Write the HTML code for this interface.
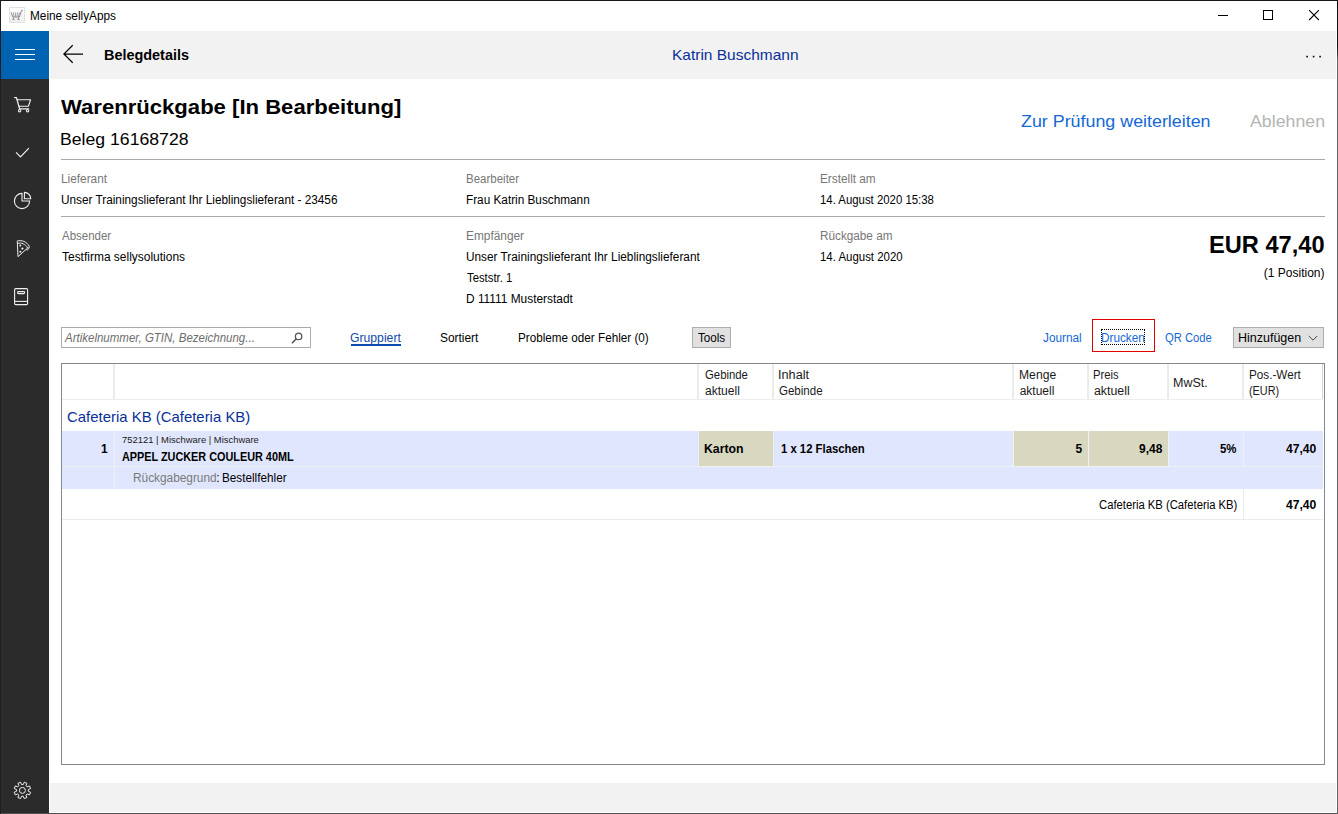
<!DOCTYPE html><html lang="de"><head><meta charset="utf-8"><title>Meine sellyApps</title><style>
*{margin:0;padding:0;box-sizing:border-box}
html,body{width:1338px;height:814px;overflow:hidden;background:#fff}
body{position:relative;font-family:"Liberation Sans", sans-serif;color:#000}
.a{position:absolute}
.t{position:absolute;white-space:nowrap;line-height:1;transform-origin:0 0}
</style></head><body>
<div class="a" style="left:0;top:0;width:1338px;height:814px;background:#fff"></div>
<div class="a" style="left:0;top:0;width:1338px;height:1px;background:#161616"></div>
<div class="a" style="left:0;top:813px;width:1338px;height:1px;background:#505050"></div>
<div class="a" style="left:0;top:0;width:1px;height:814px;background:#1e1e1e"></div>
<div class="a" style="left:1337px;top:1px;width:1px;height:813px;background:linear-gradient(#101010 0,#101010 45px,#666 60px,#666 100%)"></div>
<div class="a" style="left:1px;top:31px;width:48px;height:782px;background:#2b2b2b"></div>
<div class="a" style="left:1px;top:31px;width:48px;height:48px;background:#0063b1"></div>
<div class="a" style="left:50px;top:31px;width:1286px;height:48px;background:#f2f2f2"></div>
<div class="a" style="left:50px;top:783px;width:1286px;height:29px;background:#f2f2f2"></div>
<div class="a" style="left:61px;top:159px;width:1264px;height:1px;background:#a9a9a9"></div>
<div class="a" style="left:61px;top:216px;width:1264px;height:1px;background:#a9a9a9"></div>
<div class="a" style="left:61px;top:327px;width:250px;height:21px;border:1px solid #ababab;background:#fff"></div>
<div class="a" style="left:351px;top:344px;width:50px;height:2px;background:#0c4db4"></div>
<div class="a" style="left:692px;top:327px;width:39px;height:21px;border:1px solid #adadad;background:#e1e1e1"></div>
<div class="a" style="left:1092px;top:319px;width:63px;height:33px;border:1px solid #e10000"></div>
<div class="a" style="left:1101px;top:329px;width:44px;height:16px;border:1px dotted #000"></div>
<div class="a" style="left:1233px;top:327px;width:91px;height:21px;border:1px solid #adadad;background:#e1e1e1"></div>
<div class="a" style="left:61px;top:363px;width:1264px;height:402px;border:1px solid #828790;background:#fff"></div>
<div class="a" style="left:62px;top:399px;width:1261px;height:1px;background:#ededed"></div>
<div class="a" style="left:62px;top:431px;width:1261px;height:58px;background:#e0e6fd"></div>
<div class="a" style="left:62px;top:466px;width:1261px;height:1px;background:#f0f0f0"></div>
<div class="a" style="left:114px;top:431px;width:1px;height:58px;background:#f0f0f0"></div>
<div class="a" style="left:698px;top:431px;width:1px;height:35px;background:#f0f0f0"></div>
<div class="a" style="left:773px;top:431px;width:1px;height:35px;background:#f0f0f0"></div>
<div class="a" style="left:1013px;top:431px;width:1px;height:35px;background:#f0f0f0"></div>
<div class="a" style="left:1088px;top:431px;width:1px;height:35px;background:#f0f0f0"></div>
<div class="a" style="left:1168px;top:431px;width:1px;height:35px;background:#f0f0f0"></div>
<div class="a" style="left:1243px;top:431px;width:1px;height:35px;background:#f0f0f0"></div>
<div class="a" style="left:699px;top:431px;width:74px;height:35px;background:#d8d8c0"></div>
<div class="a" style="left:1014px;top:431px;width:74px;height:35px;background:#d8d8c0"></div>
<div class="a" style="left:1089px;top:431px;width:79px;height:35px;background:#d8d8c0"></div>
<div class="a" style="left:62px;top:519px;width:1261px;height:1px;background:#ebebeb"></div>
<div class="a" style="left:1243px;top:489px;width:1px;height:30px;background:#ebebeb"></div>
<svg class="a" style="left:0;top:0" width="1338" height="814" viewBox="0 0 1338 814" fill="none" stroke-linecap="butt"><path d="M114,364V399M698,364V399M773,364V399M1013,364V399M1088,364V399M1168,364V399M1243,364V399M1322.5,364V399" stroke="#d6d6d6" stroke-width="1"/><path d="M15,49.5H35M15,54.5H35M15,59.5H35" stroke="#fff" stroke-width="1"/><g stroke="#f0f0f0" stroke-width="1.1" stroke-linejoin="round" stroke-linecap="round"><path d="M14.6,97.5H16.4L19.6,108.9H28.6" stroke-width="1.25"/><path d="M17.2,99.7H30.6L28.4,106.2H19"/><circle cx="19.6" cy="110.7" r="1.2"/><circle cx="27.6" cy="110.7" r="1.2"/></g><path d="M16.1,152.4L20.5,156.8L28.9,148.2" stroke="#f0f0f0" stroke-width="1.2"/><g stroke="#f0f0f0" stroke-width="1.1"><path d="M22,193.4A7.6,7.6 0 1 0 29.6,201H22Z"/><path d="M24.4,192.4A6.3,6.3 0 0 1 30.7,198.7H24.4Z"/></g><g stroke="#f0f0f0" stroke-width="1" stroke-linejoin="round"><path d="M17.3,241.5L18,256.6L28.4,247.3"/><path d="M16.8,241.2C21,239.6 27,241.5 29.4,246.6"/><path d="M17.6,243.4C21,242.3 25.6,244 27.6,248"/><path d="M26.3,249.4C27,250.8 28.6,250 29.3,246.8"/></g><g fill="#f0f0f0"><circle cx="20.3" cy="245.4" r="1"/><circle cx="22.4" cy="248.6" r="1.1"/><circle cx="20.4" cy="251.7" r="1"/></g><g stroke="#f0f0f0" stroke-width="1.1"><rect x="14.6" y="288.6" width="13" height="16" rx="1.2"/><path d="M14.6,301.4H27.6"/><rect x="17.6" y="291.6" width="7" height="2" rx="0.8"/></g><path d="M23.24,784.56 L24.26,782.21 L26.88,783.30 L25.94,785.68 L27.12,786.86 L29.50,785.92 L30.59,788.54 L28.24,789.56 L28.24,791.24 L30.59,792.26 L29.50,794.88 L27.12,793.94 L25.94,795.12 L26.88,797.50 L24.26,798.59 L23.24,796.24 L21.56,796.24 L20.54,798.59 L17.92,797.50 L18.86,795.12 L17.68,793.94 L15.30,794.88 L14.21,792.26 L16.56,791.24 L16.56,789.56 L14.21,788.54 L15.30,785.92 L17.68,786.86 L18.86,785.68 L17.92,783.30 L20.54,782.21 L21.56,784.56Z" stroke="#f0f0f0" stroke-width="1" stroke-linejoin="round"/><circle cx="22.4" cy="790.4" r="3" stroke="#f0f0f0" stroke-width="1"/><path d="M72.7,45.2L63.9,54L72.7,62.8M64.2,54H83" stroke="#000" stroke-width="1.25"/><g fill="#000"><rect x="1306.3" y="55.8" width="1.6" height="1.6"/><rect x="1312.8" y="55.8" width="1.6" height="1.6"/><rect x="1319.3" y="55.8" width="1.6" height="1.6"/></g><path d="M1218,15.5H1228" stroke="#000" stroke-width="1"/><rect x="1263.5" y="10.5" width="9" height="9" stroke="#000" stroke-width="1"/><path d="M1309.1,10.2L1318.9,20M1318.9,10.2L1309.1,20" stroke="#000" stroke-width="1.1"/><defs><linearGradient id="tg" x1="0" y1="0" x2="0" y2="1"><stop offset="0" stop-color="#ffffff"/><stop offset="1" stop-color="#ececec"/></linearGradient></defs><rect x="9.5" y="7.5" width="15" height="15" fill="url(#tg)" stroke="#e2e2e2" stroke-width="1"/><g stroke="#8c8c8c" stroke-width="1"><path d="M11,12.4L12.9,17H19.4L21.6,10.4H22.9"/><path d="M13.2,12.4L14.2,16.8M15.3,12.4L15.7,16.8M17.4,12.4L17.2,16.8M19.4,12.4L18.6,16.8" stroke-width="0.9" stroke="#9a9a9a"/><path d="M13.6,17L13.3,19M18.6,17L18.4,19" stroke-width="0.9"/><path d="M12.2,19.5H14.6M17.2,19.5H19.6" stroke="#9a9a9a"/></g><g stroke="#555" stroke-width="1.3"><circle cx="298.6" cy="336.4" r="3.2"/><path d="M296.3,338.8L292,343.2" stroke-width="1.6"/></g><path d="M1308.8,336L1313,340.2L1317.2,336" stroke="#444" stroke-width="1"/></svg>
<span class="t" id="ttl" style="left:29.60px;top:10.06px;font-size:12px;color:#000;transform:scaleX(0.9840);">Meine sellyApps</span>
<span class="t" id="hd" style="left:103.70px;top:47.06px;font-size:15.5px;color:#000;font-weight:bold;transform:scaleX(0.9308);">Belegdetails</span>
<span class="t" id="usr" style="left:671.90px;top:47.05px;font-size:15px;color:#08309a;transform:scaleX(1.0324);">Katrin Buschmann</span>
<span class="t" id="h1" style="left:61.40px;top:97.06px;font-size:20px;color:#000;font-weight:bold;transform:scaleX(1.1045);">Warenrückgabe [In Bearbeitung]</span>
<span class="t" id="h2" style="left:60.40px;top:131.05px;font-size:17px;color:#000;transform:scaleX(1.0377);">Beleg 16168728</span>
<span class="t" id="a1" style="left:1021.20px;top:113.05px;font-size:17px;color:#1368d6;transform:scaleX(1.0503);">Zur Prüfung weiterleiten</span>
<span class="t" id="a2" style="left:1250.30px;top:113.05px;font-size:17px;color:#b4b4b4;transform:scaleX(1.0440);">Ablehnen</span>
<span class="t" id="l1" style="left:60.70px;top:173.06px;font-size:12px;color:#767676;transform:scaleX(0.9862);">Lieferant</span>
<span class="t" id="v1" style="left:60.70px;top:194.06px;font-size:12px;color:#000;transform:scaleX(0.9822);">Unser Trainingslieferant Ihr Lieblingslieferant - 23456</span>
<span class="t" id="l2" style="left:465.80px;top:173.06px;font-size:12px;color:#767676;transform:scaleX(0.9582);">Bearbeiter</span>
<span class="t" id="v2" style="left:465.80px;top:194.06px;font-size:12px;color:#000;transform:scaleX(0.9811);">Frau Katrin Buschmann</span>
<span class="t" id="l3" style="left:819.70px;top:173.06px;font-size:12px;color:#767676;transform:scaleX(0.9824);">Erstellt am</span>
<span class="t" id="v3" style="left:819.70px;top:194.06px;font-size:12px;color:#000;transform:scaleX(0.9480);">14. August 2020 15:38</span>
<span class="t" id="l4" style="left:61.70px;top:230.06px;font-size:12px;color:#767676;transform:scaleX(0.9568);">Absender</span>
<span class="t" id="v4" style="left:61.70px;top:251.06px;font-size:12px;color:#000;transform:scaleX(0.9971);">Testfirma sellysolutions</span>
<span class="t" id="l5" style="left:465.80px;top:230.06px;font-size:12px;color:#767676;transform:scaleX(0.9891);">Empfänger</span>
<span class="t" id="v5" style="left:465.80px;top:251.06px;font-size:12px;color:#000;transform:scaleX(0.9843);">Unser Trainingslieferant Ihr Lieblingslieferant</span>
<span class="t" id="v5b" style="left:466.80px;top:272.06px;font-size:12px;color:#000;transform:scaleX(0.9423);">Teststr. 1</span>
<span class="t" id="v5c" style="left:465.80px;top:293.06px;font-size:12px;color:#000;transform:scaleX(0.9907);">D 11111 Musterstadt</span>
<span class="t" id="l6" style="left:819.70px;top:230.06px;font-size:12px;color:#767676;transform:scaleX(0.9788);">Rückgabe am</span>
<span class="t" id="v6" style="left:819.70px;top:251.06px;font-size:12px;color:#000;transform:scaleX(0.9530);">14. August 2020</span>
<span class="t" id="eur" style="left:1208.50px;top:234.06px;font-size:23px;color:#000;font-weight:bold;transform:scaleX(1.0275);">EUR 47,40</span>
<span class="t" id="pos" style="left:1263.80px;top:267.06px;font-size:12px;color:#000;">(1 Position)</span>
<span class="t" id="ph" style="left:65.00px;top:332.06px;font-size:12px;color:#6d6d6d;font-style:italic;transform:scaleX(0.9585);">Artikelnummer, GTIN, Bezeichnung...</span>
<span class="t" id="tb1" style="left:350.20px;top:332.06px;font-size:12px;color:#0f49ad;transform:scaleX(1.0162);">Gruppiert</span>
<span class="t" id="tb2" style="left:440.30px;top:332.06px;font-size:12px;color:#000;transform:scaleX(0.9920);">Sortiert</span>
<span class="t" id="tb3" style="left:518.20px;top:332.06px;font-size:12px;color:#000;transform:scaleX(0.9750);">Probleme oder Fehler (0)</span>
<span class="t" id="tb4" style="left:698.40px;top:332.06px;font-size:12px;color:#000;transform:scaleX(0.9702);">Tools</span>
<span class="t" id="tb5" style="left:1042.90px;top:332.06px;font-size:12px;color:#1368d6;transform:scaleX(0.9845);">Journal</span>
<span class="t" id="tb6" style="left:1101.10px;top:332.06px;font-size:12px;color:#1368d6;transform:scaleX(0.9800);">Drucken</span>
<span class="t" id="tb7" style="left:1165.40px;top:332.06px;font-size:12px;color:#1368d6;transform:scaleX(0.9322);">QR Code</span>
<span class="t" id="tb8" style="left:1237.70px;top:332.06px;font-size:12px;color:#000;transform:scaleX(1.0409);">Hinzufügen</span>
<span class="t" id="c1a" style="left:704.60px;top:369.06px;font-size:12px;color:#1a1a1a;transform:scaleX(0.9464);">Gebinde</span>
<span class="t" id="c1b" style="left:704.60px;top:385.06px;font-size:12px;color:#1a1a1a;transform:scaleX(1.0044);">aktuell</span>
<span class="t" id="c2a" style="left:778.00px;top:369.06px;font-size:12px;color:#1a1a1a;transform:scaleX(1.0582);">Inhalt</span>
<span class="t" id="c2b" style="left:779.00px;top:385.06px;font-size:12px;color:#1a1a1a;transform:scaleX(0.9599);">Gebinde</span>
<span class="t" id="c3a" style="left:1018.70px;top:369.06px;font-size:12px;color:#1a1a1a;transform:scaleX(1.0128);">Menge</span>
<span class="t" id="c3b" style="left:1019.70px;top:385.06px;font-size:12px;color:#1a1a1a;">aktuell</span>
<span class="t" id="c4a" style="left:1093.00px;top:369.06px;font-size:12px;color:#1a1a1a;transform:scaleX(0.9357);">Preis</span>
<span class="t" id="c4b" style="left:1094.00px;top:385.06px;font-size:12px;color:#1a1a1a;transform:scaleX(1.0283);">aktuell</span>
<span class="t" id="c5" style="left:1173.30px;top:377.06px;font-size:12px;color:#1a1a1a;transform:scaleX(1.0412);">MwSt.</span>
<span class="t" id="c6a" style="left:1248.60px;top:369.06px;font-size:12px;color:#1a1a1a;transform:scaleX(0.9758);">Pos.-Wert</span>
<span class="t" id="c6b" style="left:1248.60px;top:385.06px;font-size:12px;color:#1a1a1a;transform:scaleX(0.9034);">(EUR)</span>
<span class="t" id="grp" style="left:67.20px;top:408.75px;font-size:15px;color:#08309a;transform:scaleX(0.9946);">Cafeteria KB (Cafeteria KB)</span>
<span class="t" id="r1n" style="left:101.00px;top:443.06px;font-size:12px;color:#000;font-weight:bold;">1</span>
<span class="t" id="r1a" style="left:121.60px;top:435.06px;font-size:9.4px;color:#1a1a1a;transform:scaleX(1.0048);">752121 | Mischware | Mischware</span>
<span class="t" id="r1b" style="left:121.60px;top:451.06px;font-size:12px;color:#000;font-weight:bold;transform:scaleX(0.9040);">APPEL ZUCKER COULEUR 40ML</span>
<span class="t" id="r1c" style="left:704.20px;top:443.06px;font-size:12px;color:#000;font-weight:bold;transform:scaleX(1.0217);">Karton</span>
<span class="t" id="r1d" style="left:781.00px;top:443.06px;font-size:12px;color:#000;font-weight:bold;transform:scaleX(0.9426);">1 x 12 Flaschen</span>
<span class="t" id="r1e" style="left:1075.60px;top:443.06px;font-size:12px;color:#000;font-weight:bold;">5</span>
<span class="t" id="r1f" style="left:1138.50px;top:443.06px;font-size:12px;color:#000;font-weight:bold;transform:scaleX(0.9968);">9,48</span>
<span class="t" id="r1g" style="left:1220.40px;top:443.06px;font-size:12px;color:#000;font-weight:bold;transform:scaleX(0.9486);">5%</span>
<span class="t" id="r1h" style="left:1285.90px;top:443.06px;font-size:12px;color:#000;font-weight:bold;transform:scaleX(1.0110);">47,40</span>
<span class="t" id="r2a" style="left:132.70px;top:472.06px;font-size:12px;color:#7a7a7a;transform:scaleX(0.9870);">Rückgabegrund</span>
<span class="t" id="r2b" style="left:216.20px;top:472.06px;font-size:12px;color:#000;">:</span>
<span class="t" id="r2c" style="left:222.10px;top:472.06px;font-size:12px;color:#000;transform:scaleX(0.9776);">Bestellfehler</span>
<span class="t" id="s1" style="left:1098.90px;top:499.06px;font-size:12px;color:#000;transform:scaleX(0.9385);">Cafeteria KB (Cafeteria KB)</span>
<span class="t" id="s2" style="left:1285.90px;top:499.06px;font-size:12px;color:#000;font-weight:bold;transform:scaleX(1.0110);">47,40</span>
</body></html>
